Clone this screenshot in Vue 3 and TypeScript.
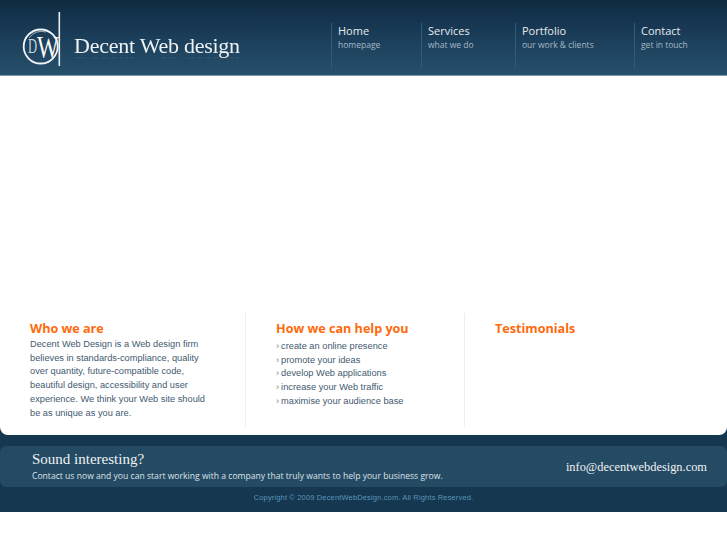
<template>
  <div class="page">
    <header class="site-header">
      <div class="logo">
        <svg class="logo-mark" width="40" height="56" viewBox="0 0 40 56">
          <circle cx="18.7" cy="34.5" r="17" fill="none" stroke="#f2f5f7" stroke-width="1.8" />
          <path d="M7 26 A15 15 0 0 1 24 20" fill="none" stroke="#9fb2c0" stroke-width="1" />
          <rect x="36.5" y="0" width="1.6" height="54" fill="#e8edf0" />
          <text class="mark-d" transform="translate(6 41) scale(0.6 1)">D</text>
          <text class="mark-w" transform="translate(15 46) scale(0.72 1)">W</text>
        </svg>
        <span class="logo-text">Decent Web design</span>
      </div>
      <nav class="main-nav">
        <a
          v-for="item in navItems"
          :key="item.title"
          class="nav-item"
          :style="{ width: item.width + 'px' }"
        >
          <span class="nav-title">{{ item.title }}</span>
          <span class="nav-sub">{{ item.sub }}</span>
        </a>
      </nav>
    </header>

    <div class="content-wrap">
      <main class="content">
        <div class="columns">
          <section class="col col-who">
            <h2>Who we are</h2>
            <p>
              Decent Web Design is a Web design firm<br />
              believes in standards-compliance, quality<br />
              over quantity, future-compatible code,<br />
              beautiful design, accessibility and user<br />
              experience. We think your Web site should<br />
              be as unique as you are.
            </p>
          </section>
          <section class="col col-help">
            <h2>How we can help you</h2>
            <ul>
              <li v-for="line in helpItems" :key="line">{{ line }}</li>
            </ul>
          </section>
          <section class="col col-test">
            <h2>Testimonials</h2>
          </section>
        </div>
      </main>
    </div>

    <footer class="site-footer">
      <div class="cta">
        <div>
          <h3>Sound interesting?</h3>
          <p>Contact us now and you can start working with a company that truly wants to help your business grow.</p>
        </div>
        <span class="cta-mail">info@decentwebdesign.com</span>
      </div>
      <div class="copyright">Copyright © 2009 DecentWebDesign.com. All Rights Reserved.</div>
    </footer>
  </div>
</template>

<script setup lang="ts">
const navItems = [
  { title: 'Home', sub: 'homepage', width: 90 },
  { title: 'Services', sub: 'what we do', width: 94 },
  { title: 'Portfolio', sub: 'our work & clients', width: 119 },
  { title: 'Contact', sub: 'get in touch', width: 93 }
]

const helpItems = [
  'create an online presence',
  'promote your ideas',
  'develop Web applications',
  'increase your Web traffic',
  'maximise your audience base'
]
</script>

<style>
html,
body {
  margin: 0;
  background: #fff;
}
</style>

<style scoped>
.page {
  width: 727px;
  font-family: "Liberation Sans", Arial, sans-serif;
}

.site-header {
  height: 75px;
  display: flex;
  justify-content: space-between;
  background: linear-gradient(to bottom, #0f2b3f 0, #12304a 12px, #1c3f5b 40px, #26506b 75px);
  border-bottom: 1px solid #7d97a8;
}

.logo {
  display: flex;
  align-items: flex-start;
  padding: 12px 0 0 22px;
}

.logo-mark {
  display: block;
}

.mark-d {
  font-family: "Liberation Serif", serif;
  font-size: 21px;
  fill: #c9d4db;
}

.mark-w {
  font-family: "Liberation Serif", serif;
  font-size: 32px;
  fill: #f6f8f9;
}

.logo-text {
  margin: 20px 0 0 12px;
  font-family: "Liberation Serif", serif;
  font-size: 22px;
  line-height: 28px;
  letter-spacing: -0.25px;
  color: #eef2f4;
  -webkit-box-reflect: below -10px linear-gradient(transparent 65%, rgba(255, 255, 255, 0.3));
}

.main-nav {
  display: flex;
  padding-top: 23px;
}

.nav-item {
  box-sizing: border-box;
  height: 45px;
  padding: 0 0 0 6px;
  border-left: 1px solid #2f5c7a;
  display: flex;
  flex-direction: column;
  font-family: "Open Sans", sans-serif;
}

.nav-title {
  font-size: 11px;
  line-height: 16px;
  color: #e6ebee;
}

.nav-sub {
  font-size: 8.5px;
  line-height: 12px;
  color: #a5b8c6;
}

.content-wrap {
  background: #15374f;
}

.content {
  height: 359px;
  box-sizing: border-box;
  padding-top: 237px;
  background: #fff;
  border-radius: 0 0 8px 8px;
}

.columns {
  display: flex;
  height: 114px;
}

.col {
  box-sizing: border-box;
  height: 100%;
  padding-top: 7px;
}

.col-who {
  width: 246px;
  padding-left: 30px;
  border-right: 1px solid #e9eff4;
}

.col-help {
  width: 219px;
  padding-left: 30px;
  border-right: 1px solid #e9eff4;
}

.col-test {
  padding-left: 30px;
}

h2 {
  margin: 0;
  font-family: "Open Sans", sans-serif;
  font-size: 12.6px;
  line-height: 17px;
  font-weight: 700;
  color: #ff6a0d;
}

.col p {
  margin: 1px 0 0;
  font-size: 9.25px;
  line-height: 13.7px;
  color: #3f5a70;
}

.col ul {
  margin: 3px 0 0;
  padding: 0;
  list-style: none;
}

.col li {
  font-size: 9.25px;
  line-height: 13.7px;
  color: #3f5a70;
}

.col li::before {
  content: "›";
  margin-right: 2px;
  color: #6b8193;
}

.site-footer {
  height: 77px;
  box-sizing: border-box;
  padding-top: 11px;
  background: #15374f;
}

.cta {
  height: 41px;
  box-sizing: border-box;
  padding: 0 20px 0 32px;
  display: flex;
  justify-content: space-between;
  align-items: center;
  background: #254a63;
  border-radius: 6px;
}

.cta h3 {
  margin: 0;
  font-family: "Liberation Serif", serif;
  font-size: 15px;
  line-height: 17px;
  font-weight: 400;
  color: #eef2f4;
}

.cta p {
  margin: 2px 0 0;
  font-family: "Open Sans", sans-serif;
  font-size: 8.6px;
  line-height: 13px;
  color: #dbe3e8;
}

.cta-mail {
  margin-top: 2px;
  font-family: "Liberation Serif", serif;
  font-size: 12.4px;
  color: #eef2f4;
}

.copyright {
  margin-top: 5px;
  text-align: center;
  font-size: 7.5px;
  line-height: 12px;
  letter-spacing: 0.15px;
  color: #5a94ba;
}
</style>
